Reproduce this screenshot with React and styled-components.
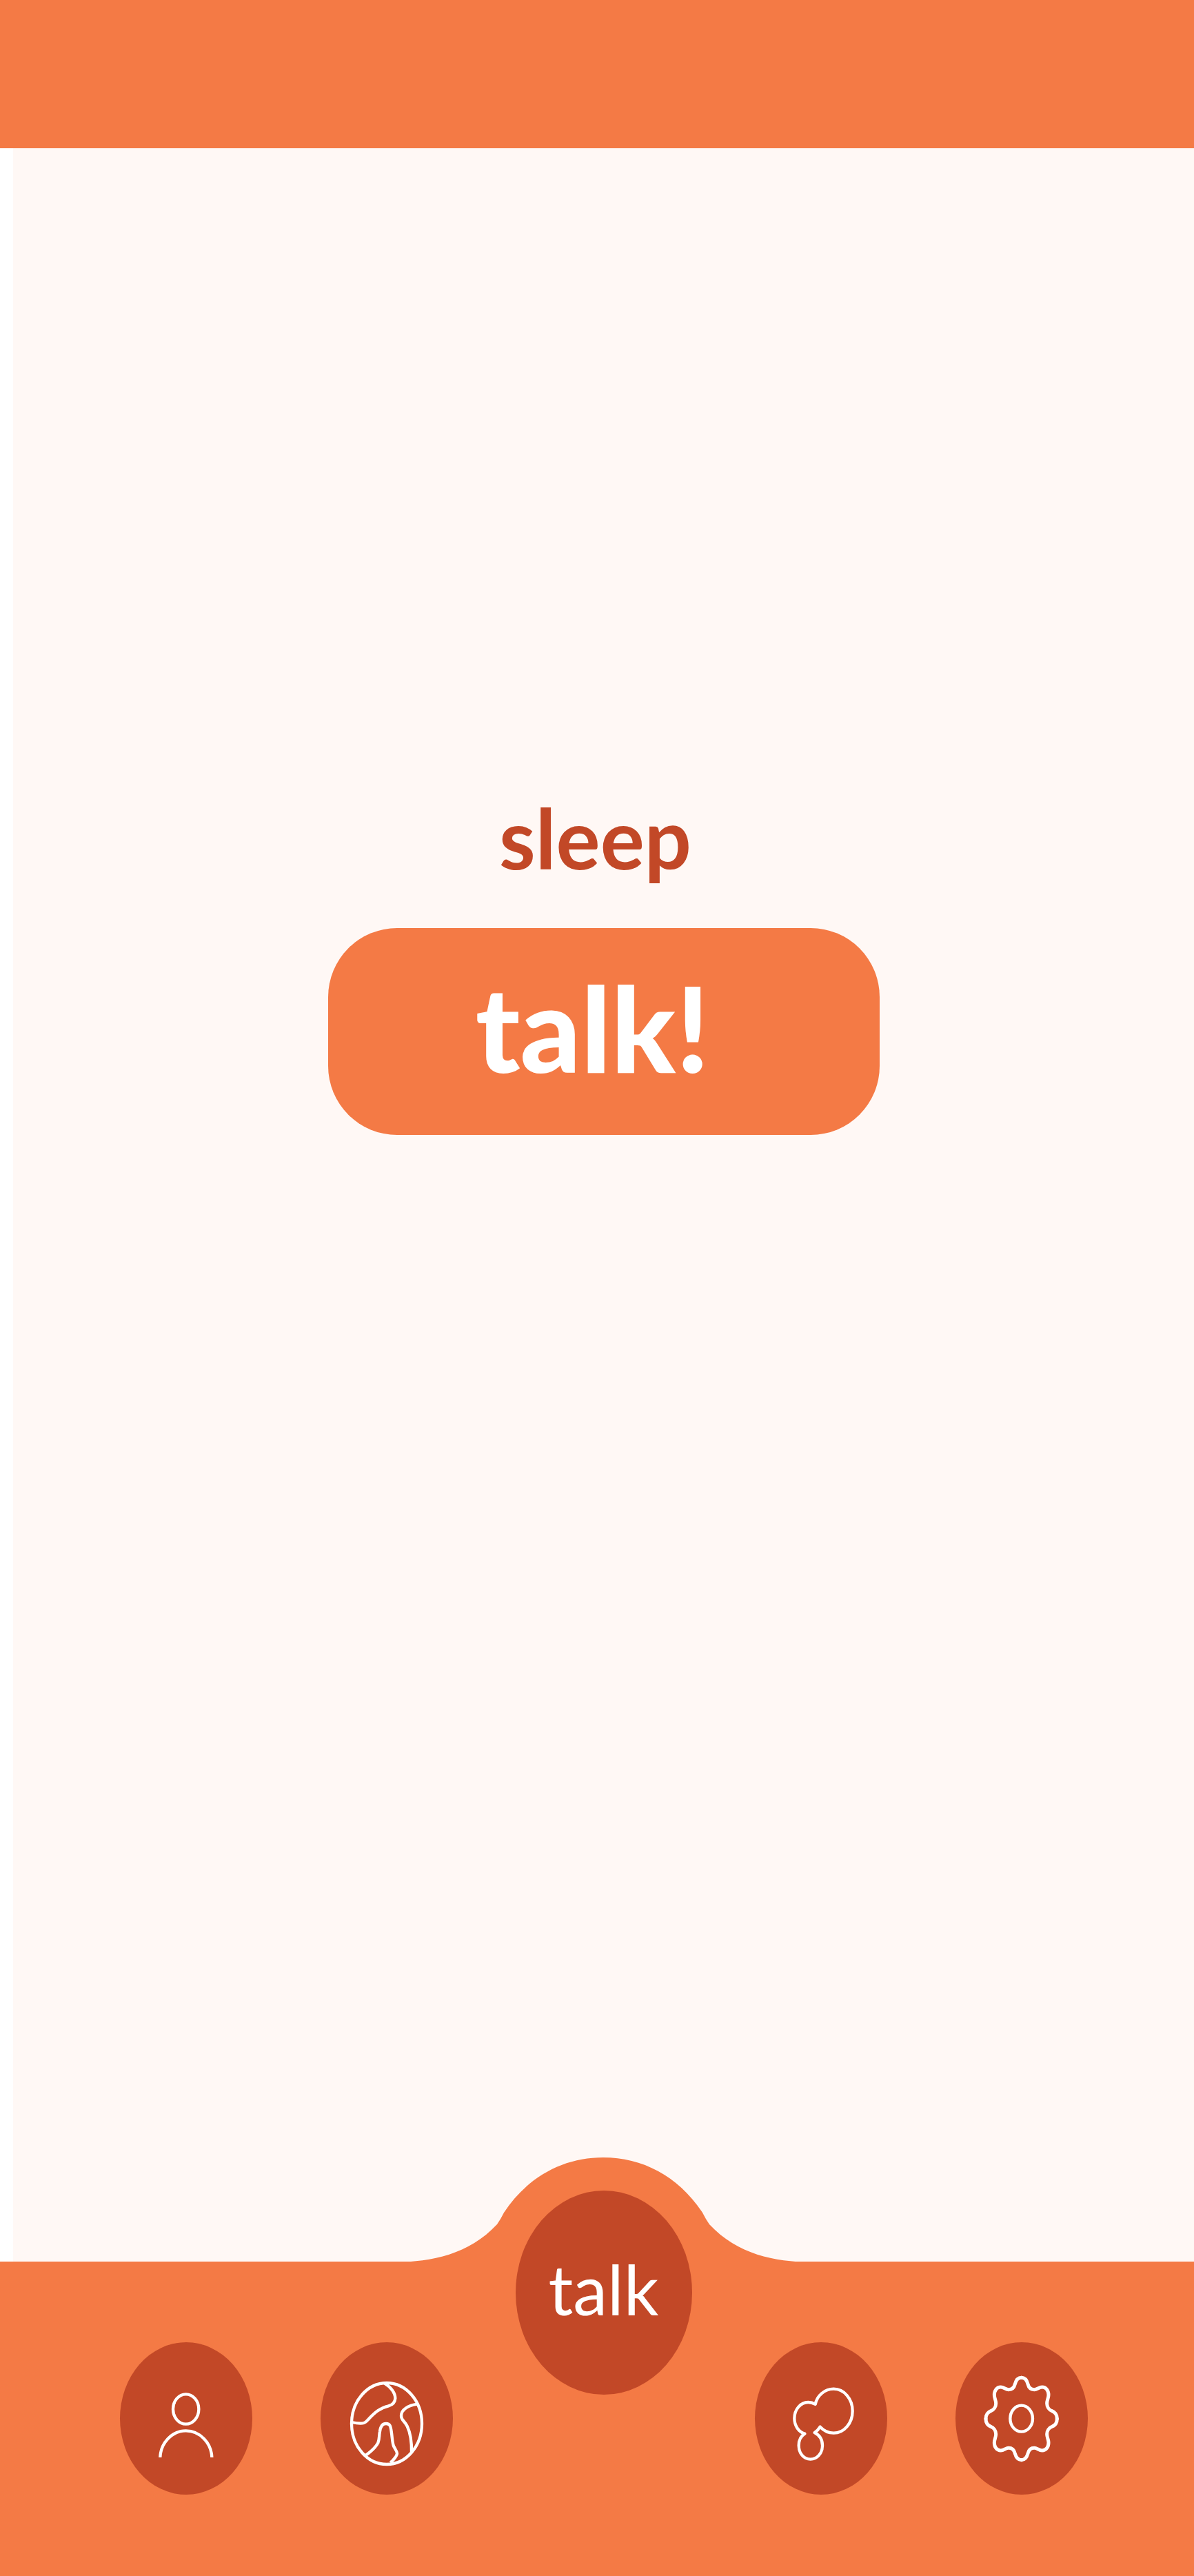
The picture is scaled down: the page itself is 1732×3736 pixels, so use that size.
import React from "react";
import styled, { createGlobalStyle } from "styled-components";

const orange = "#f47a45";
const rust = "#c24827";
const cream = "#fff8f5";

const GlobalStyle = createGlobalStyle`
  *, *::before, *::after { box-sizing: border-box; }
  body {
    margin: 0;
    background: #fff;
    font-family: Lato, "Open Sans", sans-serif;
  }
`;

const Page = styled.div`
  min-height: 100vh;
  display: flex;
  flex-direction: column;
`;

const Header = styled.header`
  height: 215px;
  background: ${orange};
`;

const Main = styled.main`
  flex: 1;
  margin-left: 19px;
  padding: 920px 24px 0;
  display: flex;
  flex-direction: column;
  align-items: center;
  background: ${cream};
`;

const Title = styled.h1`
  margin: 0;
  padding-right: 24px;
  color: ${rust};
  font-size: 120px;
  font-weight: 700;
  line-height: 160px;
`;

const TalkButton = styled.button`
  width: 100%;
  max-width: 800px;
  height: 300px;
  margin-top: 51px;
  padding: 0 32px 12px 0;
  border: 0;
  border-radius: 100px;
  background: ${orange};
  color: #fff;
  font-family: inherit;
  font-size: 172px;
  font-weight: 900;
  line-height: 240px;
  cursor: pointer;
`;

const Nav = styled.nav`
  position: relative;
  height: 456px;
  padding-left: 19px;
  display: flex;
  justify-content: center;
  gap: 91px;
  background: ${orange};
`;

const Bump = styled.svg`
  position: absolute;
  left: calc(50% + 9px);
  bottom: 100%;
  width: 602px;
  height: 152px;
  margin-bottom: -1px;
  transform: translateX(-50%);
  pointer-events: none;
`;

const Group = styled.div`
  display: flex;
  gap: 99px;
  padding-top: 117px;
`;

const RoundLink = styled.a`
  position: relative;
  display: flex;
  align-items: center;
  justify-content: center;
  flex: none;
  width: ${(p) => (p.$large ? 256 : 192)}px;
  height: ${(p) => (p.$large ? 296 : 221)}px;
  margin-top: ${(p) => (p.$large ? -103 : 0)}px;
  padding-bottom: ${(p) => (p.$large ? 12 : 0)}px;
  border-radius: 50%;
  background: ${rust};
  color: #fff;
  font-size: 100px;
  line-height: 120px;
  text-decoration: none;
`;

const Icon = styled.svg`
  width: 100%;
  height: 100%;
  fill: none;
  stroke: #fff;
  stroke-width: 13;
  stroke-linejoin: round;
`;

const gearQuarter =
  "M0 -179C16 -179 24 -166 28 -151C32 -134 43 -127 56 -127C68 -127 76 -138 90 -138C108 -138 118 -122 118 -104C118 -89 111 -82 111 -67C111 -52 120 -39 133 -34C146 -29 155 -16 155 0";

function PersonIcon() {
  return (
    <Icon viewBox="70 81 576 663" aria-hidden="true">
      <ellipse cx="357" cy="372" rx="56" ry="65" />
      <path d="M245 582C247 520 295 466 357 466S468 520 470 582" />
    </Icon>
  );
}

function GlobeIcon() {
  return (
    <Icon viewBox="72 81 576 663" aria-hidden="true">
      <ellipse cx="360" cy="435" rx="153" ry="177" />
      <path d="M350 259C378 276 397 301 397 325C396 342 385 353 368 358C330 367 309 386 283 413C275 421 271 429 261 432C245 437 226 433 207 429" />
      <path d="M494 350C453 355 423 374 423 401C423 420 437 422 449 446C464 477 469 515 468 562" />
      <path d="M267 574C291 557 310 541 322 519C329 500 326 489 330 469C333 447 341 435 357 435C375 435 377 448 380 469C384 494 384 520 391 535C399 550 405 556 405 566C402 579 390 592 376 605" />
    </Icon>
  );
}

function BubblesIcon() {
  return (
    <Icon viewBox="75 81 576 663" aria-hidden="true">
      <path d="M338 351C345 313 379 284 418 284C463 284 500 327 500 380C500 433 463 476 418 476C395 476 375 466 359 449C353 459 346 467 335 474C356 485 369 506 369 530C369 564 346 590 317 590C288 590 266 564 266 530C266 507 276 489 292 479C265 471 247 444 247 412C247 373 274 342 307 342C318 342 328 345 338 351Z" />
    </Icon>
  );
}

function GearIcon() {
  return (
    <Icon viewBox="77 81 576 663" aria-hidden="true">
      <ellipse cx="364" cy="413" rx="49" ry="57" />
      <g transform="translate(364 414)" strokeWidth="15" strokeLinecap="round">
        <path d={gearQuarter} />
        <path d={gearQuarter} transform="scale(-1 1)" />
        <path d={gearQuarter} transform="scale(1 -1)" />
        <path d={gearQuarter} transform="scale(-1 -1)" />
      </g>
    </Icon>
  );
}

export default function App() {
  return (
    <Page>
      <GlobalStyle />
      <Header />
      <Main>
        <Title>sleep</Title>
        <TalkButton type="button">talk!</TalkButton>
      </Main>
      <Nav>
        <Bump viewBox="0 0 602 152" aria-hidden="true">
          <path
            fill={orange}
            d="M0 152C52 151 106 141 147 97Q152 90 157 80C192 27 244 0 301 0S410 27 445 80Q450 90 455 97C496 141 550 151 602 152Z"
          />
        </Bump>
        <Group>
          <RoundLink href="#profile" aria-label="Profile"><PersonIcon /></RoundLink>
          <RoundLink href="#world" aria-label="World"><GlobeIcon /></RoundLink>
        </Group>
        <RoundLink $large href="#talk">talk</RoundLink>
        <Group>
          <RoundLink href="#bubbles" aria-label="Bubbles"><BubblesIcon /></RoundLink>
          <RoundLink href="#settings" aria-label="Settings"><GearIcon /></RoundLink>
        </Group>
      </Nav>
    </Page>
  );
}
